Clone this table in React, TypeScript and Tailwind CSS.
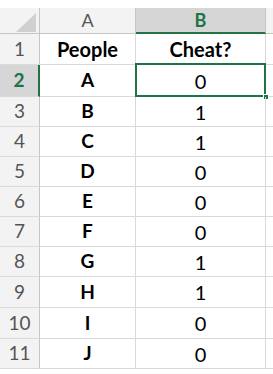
const ROWS: { n: number; name: string; cheat: number; h: number }[] = [
  { n: 2, name: "A", cheat: 0, h: 32 },
  { n: 3, name: "B", cheat: 1, h: 30 },
  { n: 4, name: "C", cheat: 1, h: 30 },
  { n: 5, name: "D", cheat: 0, h: 30 },
  { n: 6, name: "E", cheat: 0, h: 30 },
  { n: 7, name: "F", cheat: 0, h: 30 },
  { n: 8, name: "G", cheat: 1, h: 30 },
  { n: 9, name: "H", cheat: 1, h: 31 },
  { n: 10, name: "I", cheat: 0, h: 31 },
  { n: 11, name: "J", cheat: 0, h: 30 },
];

const font = "font-['Lato','Liberation_Sans',sans-serif]";

export default function App() {
  return (
    <div className={`h-[374px] w-[273px] overflow-hidden bg-white ${font}`}>
      <div className="h-[8px] bg-white" />

      {/* column headers */}
      <div className="flex h-[26px] bg-[#f3f3f3]">
        <div className="relative w-[40px] border-r border-b border-[#c6c6c6]">
          <svg className="absolute left-[16px] top-[5px]" width="20" height="19" viewBox="0 0 20 19">
            <polygon points="20,0 20,19 0,19" fill="#d0d0d0" />
          </svg>
        </div>
        <div className="flex w-[96px] items-center justify-center border-r border-b border-[#c6c6c6] text-[18px] text-[#555]">
          A
        </div>
        <div className="flex w-[130px] items-center justify-center border-r border-b-2 border-r-[#c6c6c6] border-b-[#217346] bg-[#d6d6d6] text-[18px] font-bold text-[#217346]">
          B
        </div>
        <div className="flex-1 border-b border-[#c6c6c6]" />
      </div>

      {/* row 1 */}
      <div className="flex h-[31px]">
        <div className="flex w-[40px] items-center justify-center border-r border-b border-r-[#c6c6c6] border-b-[#dadada] bg-[#f3f3f3] text-[19px] text-[#555]">
          1
        </div>
        <div className="flex w-[96px] items-center justify-center border-r border-b border-[#d9d9d9] text-[20px] font-bold text-black">
          People
        </div>
        <div className="flex w-[130px] items-center justify-center border-r border-b border-[#d9d9d9] text-[20px] font-bold text-black">
          Cheat?
        </div>
        <div className="flex-1 border-b border-[#d9d9d9]" />
      </div>

      {ROWS.map((r) => {
        const sel = r.n === 2;
        return (
          <div key={r.n} className="flex" style={{ height: r.h }}>
            <div
              className={
                sel
                  ? "flex w-[40px] items-center justify-center border-r-2 border-b border-r-[#217346] border-b-[#dadada] bg-[#d6d6d6] text-[19px] font-bold text-[#217346]"
                  : "flex w-[40px] items-center justify-center border-r border-b border-r-[#c6c6c6] border-b-[#dadada] bg-[#f3f3f3] text-[19px] text-[#555]"
              }
            >
              {r.n}
            </div>
            <div className="flex w-[96px] items-center justify-center border-r border-b border-[#d9d9d9] text-[19px] font-bold text-black">
              {r.name}
            </div>
            <div className="relative flex w-[130px] items-center justify-center border-r border-b border-[#d9d9d9] text-[20px] text-black">
              {r.cheat}
              {sel && (
                <>
                  <div className="absolute -left-[1px] -top-[2px] -right-[1px] -bottom-[1px] border-2 border-[#217346]" />
                  <div className="absolute -right-[4px] -bottom-[4px] h-[6px] w-[6px] border border-white bg-[#217346]" />
                </>
              )}
            </div>
            <div className="flex-1 border-b border-[#d9d9d9]" />
          </div>
        );
      })}
    </div>
  );
}
